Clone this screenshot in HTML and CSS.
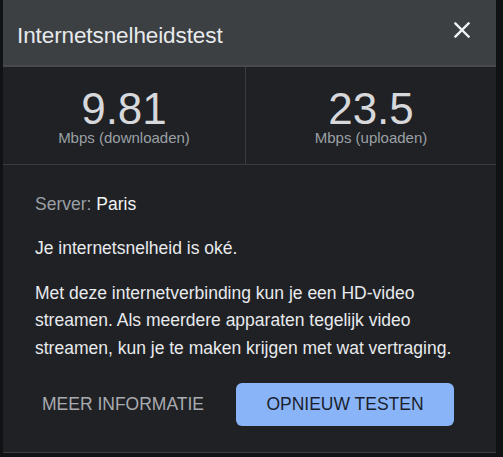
FILE: index.html
```html
<!DOCTYPE html>
<html lang="nl">
<head>
<meta charset="utf-8">
<title>Internetsnelheidstest</title>
<link rel="stylesheet" href="styles.css">
</head>
<body>
<div class="dialog">
  <header class="header">
    <h1 class="title">Internetsnelheidstest</h1>
    <button class="close" aria-label="Sluiten">
      <svg width="16" height="16" viewBox="0 0 16 16"><path d="M1.5 1.5 L14.5 14.5 M14.5 1.5 L1.5 14.5" stroke="#f1f3f4" stroke-width="2.4" stroke-linecap="square" fill="none"/></svg>
    </button>
  </header>
  <section class="stats">
    <div class="stat stat-left">
      <div class="value">9.81</div>
      <div class="unit">Mbps (downloaden)</div>
    </div>
    <div class="stat">
      <div class="value">23.5</div>
      <div class="unit">Mbps (uploaden)</div>
    </div>
  </section>
  <section class="content">
    <p class="server"><span class="muted">Server:</span> Paris</p>
    <p class="status">Je internetsnelheid is oké.</p>
    <p class="desc">Met deze internetverbinding kun je een HD-video streamen. Als meerdere apparaten tegelijk video streamen, kun je te maken krijgen met wat vertraging.</p>
    <div class="actions">
      <button class="btn btn-text">MEER INFORMATIE</button>
      <button class="btn btn-primary">OPNIEUW TESTEN</button>
    </div>
  </section>
</div>
</body>
</html>
```
FILE: styles.css
```css
* { box-sizing: border-box; }
html, body { margin: 0; padding: 0; }
body {
  background: #111213;
  font-family: "Liberation Sans", Arial, sans-serif;
  color: #e8eaed;
  width: 503px;
  height: 457px;
  overflow: hidden;
}
.dialog {
  margin-left: 3px;
  width: 493px;
  height: 453px;
  background: #202124;
  border-bottom: 1px solid #3a3c40;
}
.header {
  height: 67px;
  background: #3c4043;
  border-bottom: 2px solid #47494d;
  display: flex;
  align-items: center;
  justify-content: space-between;
  padding: 6px 26px 0 14px;
}
.title {
  margin: 0;
  font-weight: normal;
  font-size: 22.5px;
  color: #e8eaed;
  letter-spacing: -0.1px;
}
.close {
  background: none;
  border: 0;
  padding: 0;
  margin-top: -12px;
  width: 16px;
  height: 16px;
  display: flex;
}
.stats {
  display: grid;
  grid-template-columns: 243px 1fr;
  height: 98px;
  border-bottom: 1px solid #3a3c40;
}
.stat {
  text-align: center;
  padding-top: 20px;
}
.stat-left { border-right: 1px solid #3a3c40; }
.value {
  font-size: 44px;
  line-height: 44px;
  color: #d6d8dc;
}
.unit {
  font-size: 15px;
  line-height: 14px;
  color: #9aa0a6;
}
.content {
  padding: 26px 14px 0 32px;
  font-size: 17.5px;
  line-height: 27.5px;
}
.content p { margin: 0; }
.muted { color: #9aa0a6; }
.server { color: #f1f3f4; }
.status { margin-top: 16px !important; }
.desc { margin-top: 17.5px !important; }
.actions {
  display: flex;
  gap: 4px;
  margin: 21px 0 0 -21px;
}
.btn {
  width: 218px;
  height: 43px;
  border: 0;
  border-radius: 6px;
  font-family: "Liberation Sans", Arial, sans-serif;
  font-size: 17.5px;
  padding: 0;
}
.btn-text {
  background: transparent;
  color: #a8abb0;
}
.btn-primary {
  background: #8ab4f8;
  color: #1a1f2e;
}
```
